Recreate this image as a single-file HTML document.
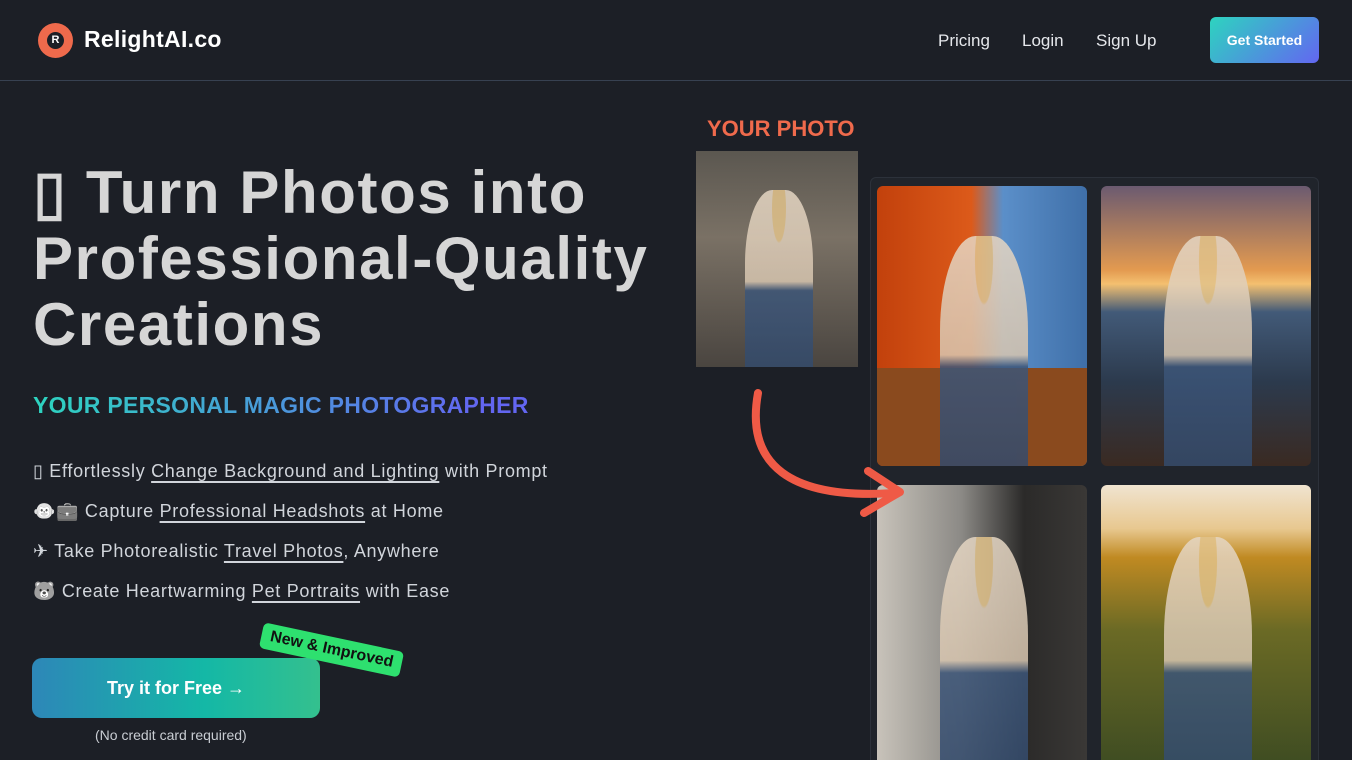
<!DOCTYPE html>
<html><head><meta charset="utf-8"><style>
*{margin:0;padding:0;box-sizing:border-box}
html,body{width:1352px;height:760px;overflow:hidden}
body{background:#1c1f26;font-family:"Liberation Sans","Noto Sans CJK SC",sans-serif;color:#e5e7eb;position:relative}
.hdr{position:absolute;left:0;top:0;width:1352px;height:81px;border-bottom:1px solid #374151}
.logo{position:absolute;left:38px;top:23px;width:35px;height:35px;border-radius:50%;background:#ef6a4c}
.logo b{position:absolute;left:9px;top:9px;width:17px;height:17px;border-radius:50%;background:#1c1f26;color:#fff;font-size:11px;text-align:center;line-height:17px}
.brand{position:absolute;left:84px;top:26px;font-size:23px;font-weight:bold;color:#fff;letter-spacing:0.3px}
.nav{position:absolute;top:31px;font-size:17px;color:#e5e7eb}
.gs{position:absolute;left:1210px;top:17px;width:109px;height:46px;border-radius:6px;background:linear-gradient(135deg,#2dd4bf,#6366f1);color:#fff;font-weight:bold;font-size:14px;text-align:center;line-height:46px}
h1{position:absolute;left:33px;top:160px;font-size:60px;line-height:66px;font-weight:bold;color:#d6d6d6;width:680px;letter-spacing:1.6px}
.sub{position:absolute;left:33px;top:392px;font-size:23px;font-weight:bold;letter-spacing:0.3px;background:linear-gradient(90deg,#2dd4bf,#6366f1 90%);-webkit-background-clip:text;color:transparent}
.f{position:absolute;left:33px;font-size:18px;color:#d1d5db;letter-spacing:0.7px;white-space:nowrap}
.f u{text-decoration:underline;text-underline-offset:4px;text-decoration-thickness:2px}
.e{filter:grayscale(1) brightness(1.6)}
.btn{position:absolute;left:32px;top:658px;width:288px;height:60px;border-radius:10px;background:linear-gradient(90deg,#2d87b8,#14b8a6 60%,#34c08e);color:#fff;font-weight:bold;font-size:18px;text-align:center;line-height:60px}
.tag{position:absolute;left:260px;top:637px;padding:4px 9px;background:#2ee06f;color:#111;font-weight:bold;font-size:16px;border-radius:5px;transform:rotate(12deg)}
.nc{position:absolute;left:95px;top:727px;font-size:14px;color:#c9cdd3}
.yp{position:absolute;left:707px;top:116px;font-size:22px;font-weight:bold;color:#ef6a4c}
.img{position:absolute;border-radius:6px;overflow:hidden}
.pan{position:absolute;left:870px;top:177px;width:449px;height:600px;border:1px solid #2c313a;border-radius:6px;background:#20242b}
.person{position:absolute;left:30%;width:42%;top:18%;height:85%;background:radial-gradient(ellipse at 50% 10%,#e2c38b 0 14%,transparent 15%),linear-gradient(#e6d7c4,#d8c6b0 50%,#3d5679 55%,#334a6b);border-radius:40% 40% 0 0;opacity:.85}
</style></head><body>
<div class="hdr">
<div class="logo"><b>R</b></div><div class="brand">RelightAI.co</div>
<div class="nav" style="left:938px">Pricing</div>
<div class="nav" style="left:1022px">Login</div>
<div class="nav" style="left:1096px">Sign Up</div>
<div class="gs">Get Started</div>
</div>
<h1>▯ Turn Photos into Professional-Quality Creations</h1>
<div class="sub">YOUR PERSONAL MAGIC PHOTOGRAPHER</div>
<div class="f" style="top:461px">▯ Effortlessly <u>Change Background and Lighting</u> with Prompt</div>
<div class="f" style="top:501px"><span class="e">🐵💼</span> Capture <u>Professional Headshots</u> at Home</div>
<div class="f" style="top:541px">✈ Take Photorealistic <u>Travel Photos</u>, Anywhere</div>
<div class="f" style="top:581px"><span class="e">🐻</span>  Create Heartwarming <u>Pet Portraits</u> with Ease</div>
<div class="btn">Try it for Free →</div>
<div class="tag">New &amp; Improved</div>
<div class="nc">(No credit card required)</div>
<div class="yp">YOUR PHOTO</div>
<div class="img" style="left:696px;top:151px;width:162px;height:216px;border-radius:0;background:linear-gradient(#5b5750,#7a7165 40%,#4a4540)"><div class="person"></div></div>
<div class="pan"></div>
<div class="img" style="left:877px;top:186px;width:210px;height:280px;background:linear-gradient(90deg,#c2410c,#dc5a1a 45%,#5b8fc9 60%,#3f6fa8);"><div style="position:absolute;bottom:0;left:0;right:0;height:35%;background:#8a4a1e"></div><div class="person"></div></div>
<div class="img" style="left:1101px;top:186px;width:210px;height:280px;background:linear-gradient(#6b5a70,#e39a50 30%,#f4c070 35%,#425a78 45%,#2c3a4d 70%,#3a2a22)"><div class="person"></div></div>
<div class="img" style="left:877px;top:485px;width:210px;height:290px;background:linear-gradient(90deg,#c8c3ba,#8c8a86 40%,#2b2a29 70%,#3a3836)"><div class="person"></div></div>
<div class="img" style="left:1101px;top:485px;width:210px;height:290px;background:linear-gradient(#f0e4d0,#e8c890 15%,#c08a22 25%,#6b6a25 50%,#3b4a22)"><div class="person"></div></div>
<svg style="position:absolute;left:740px;top:385px" width="180" height="150"><path d="M18 8 C5 80 50 115 155 108" fill="none" stroke="#ef5a46" stroke-width="8" stroke-linecap="round"/><path d="M128 86 L160 107 L124 128" fill="none" stroke="#ef5a46" stroke-width="8" stroke-linecap="round" stroke-linejoin="round"/></svg>
</body></html>
